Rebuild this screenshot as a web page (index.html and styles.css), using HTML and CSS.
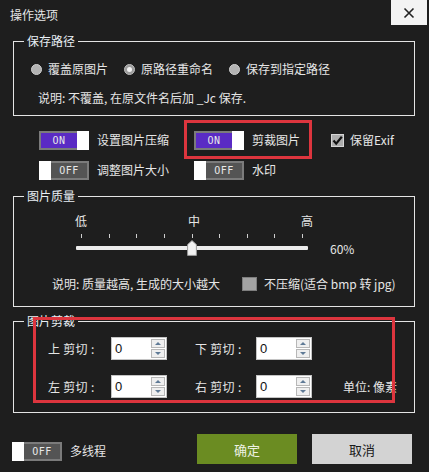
FILE: index.html
```html
<!DOCTYPE html>
<html lang="zh">
<head>
<meta charset="utf-8">
<title>操作选项</title>
<link rel="stylesheet" href="styles.css">
</head>
<body>
<div class="dialog">
  <header class="titlebar">
    <span class="title">操作选项</span>
    <button class="close" aria-label="关闭">
      <svg width="12" height="12" viewBox="0 0 12 12"><path d="M1.5 1.5 L10.5 10.5 M10.5 1.5 L1.5 10.5" stroke="#222" stroke-width="1.6" fill="none"/></svg>
    </button>
  </header>

  <fieldset class="group g-path">
    <legend>保存路径</legend>
    <div class="radios">
      <span class="radio"><span class="dot"></span>覆盖原图片</span>
      <span class="radio on"><span class="dot"></span>原路径重命名</span>
      <span class="radio"><span class="dot"></span>保存到指定路径</span>
    </div>
    <p class="note">说明: 不覆盖, 在原文件名后加 _Jc 保存.</p>
  </fieldset>

  <div class="switches">
    <div class="opt"><span class="toggle on"><span class="face">ON</span><span class="knob"></span></span><span class="lbl">设置图片压缩</span></div>
    <div class="opt hl"><span class="toggle on"><span class="face">ON</span><span class="knob"></span></span><span class="lbl">剪裁图片</span></div>
    <div class="opt"><span class="cbox"><svg width="13" height="13" viewBox="0 0 13 13"><path d="M2.5 6.5 L5.2 9.6 L10.8 2.8" stroke="#111" stroke-width="2.2" fill="none"/></svg></span><span class="lbl">保留Exif</span></div>
    <div class="opt"><span class="toggle off"><span class="knob"></span><span class="face">OFF</span></span><span class="lbl">调整图片大小</span></div>
    <div class="opt"><span class="toggle off"><span class="knob"></span><span class="face">OFF</span></span><span class="lbl">水印</span></div>
  </div>

  <fieldset class="group g-quality">
    <legend>图片质量</legend>
    <div class="slider-row">
      <div class="slider">
        <div class="marks"><span>低</span><span>中</span><span>高</span></div>
        <div class="ticks"><i></i><i></i><i></i><i></i><i></i><i></i><i></i><i></i><i></i></div>
        <div class="track-area">
          <div class="track"></div>
          <svg class="thumb" style="left:50%" width="10" height="16" viewBox="0 0 10 16"><path d="M5 0.6 L9.4 4.6 L9.4 15.4 L0.6 15.4 L0.6 4.6 Z" fill="#f2f2f2" stroke="#9a9a9a" stroke-width="1"/></svg>
        </div>
      </div>
      <span class="pct">60%</span>
    </div>
    <div class="q-note">
      <span class="desc">说明: 质量越高, 生成的大小越大</span>
      <span class="sq"></span>
      <span>不压缩(适合 bmp 转 jpg)</span>
    </div>
  </fieldset>

  <fieldset class="group g-crop">
    <legend>图片剪裁</legend>
    <div class="crop-row">
      <span class="clbl">上 剪切 :</span>
      <span class="spin"><span class="val">0</span><span class="btns"><b class="up"></b><b class="down"></b></span></span>
      <span class="clbl second">下 剪切 :</span>
      <span class="spin"><span class="val">0</span><span class="btns"><b class="up"></b><b class="down"></b></span></span>
    </div>
    <div class="crop-row">
      <span class="clbl">左 剪切 :</span>
      <span class="spin"><span class="val">0</span><span class="btns"><b class="up"></b><b class="down"></b></span></span>
      <span class="clbl second">右 剪切 :</span>
      <span class="spin"><span class="val">0</span><span class="btns"><b class="up"></b><b class="down"></b></span></span>
      <span class="unit">单位: 像素</span>
    </div>
  </fieldset>

  <footer class="footer">
    <div class="opt"><span class="toggle off"><span class="knob"></span><span class="face">OFF</span></span><span class="lbl">多线程</span></div>
    <button class="btn ok">确定</button>
    <button class="btn cancel">取消</button>
  </footer>
</div>
</body>
</html>
```

FILE: styles.css
```css
html, body {
  margin: 0;
  padding: 0;
  background: #1e1e1e;
}
body {
  width: 429px;
  height: 472px;
  overflow: hidden;
  font-family: "Noto Sans CJK SC", "Microsoft YaHei", sans-serif;
  font-size: 12px;
  color: #e6e6e6;
}
.dialog {
  display: flex;
  flex-direction: column;
}

/* title bar */
.titlebar {
  display: flex;
  justify-content: space-between;
  align-items: flex-start;
  height: 32px;
}
.title {
  margin: 6px 0 0 10px;
  line-height: 18px;
  font-size: 12px;
}
.close {
  width: 36px;
  height: 25px;
  margin: 0 2px 0 0;
  padding: 0;
  border: none;
  background: #f3f3f3;
  display: flex;
  align-items: center;
  justify-content: center;
}

/* group boxes */
.group {
  margin: 0 14px 0 13px;
  padding: 0;
  border: 1px solid #e4e4e4;
  min-width: 0;
  position: relative;
}
.group legend {
  margin-left: 10px;
  padding: 0 3px;
  height: 18px;
  line-height: 18px;
  font-size: 12px;
  color: #e8eef4;
}

.g-path { padding-bottom: 8px; }
.radios {
  display: flex;
  align-items: center;
  height: 20px;
  margin-top: 9px;
  padding-left: 17px;
}
.radio {
  display: flex;
  align-items: center;
  margin-right: 16px;
  line-height: 20px;
}
.dot {
  box-sizing: border-box;
  width: 11px;
  height: 11px;
  border-radius: 50%;
  background: #b3b3b3;
  border: 1px solid #d0d0d0;
  margin-right: 6px;
  display: flex;
  align-items: center;
  justify-content: center;
}
.radio.on .dot {
  background: #9c9c9c;
  border-color: #bdbdbd;
}
.radio.on .dot::before {
  content: "";
  width: 5px;
  height: 5px;
  border-radius: 50%;
  background: #f4f4f4;
}
.note {
  margin: 10px 0 0 24px;
  line-height: 18px;
}

/* switches */
.switches {
  display: grid;
  grid-template-columns: 155px 137px auto;
  grid-auto-rows: 20px;
  row-gap: 10px;
  padding-left: 39px;
  margin: 14px 0 7px;
}
.opt {
  display: flex;
  align-items: center;
  position: relative;
}
.opt .lbl { margin-left: 8px; line-height: 20px; }
.hl::after {
  content: "";
  position: absolute;
  left: -10px;
  top: -10px;
  width: 128px;
  height: 39px;
  box-sizing: border-box;
  border: 3px solid #dd353e;
}
.toggle {
  display: flex;
  width: 50px;
  height: 19px;
  flex: none;
}
.toggle .face {
  flex: 1;
  box-sizing: border-box;
  border: 2px solid #7b7b7b;
  display: flex;
  align-items: center;
  justify-content: center;
  font-family: "DejaVu Sans Mono", monospace;
  font-size: 10px;
  letter-spacing: 0.5px;
  color: #e8e8e8;
}
.toggle.on .face { background: #5a2bc4; border-right: none; }
.toggle.off .face { background: #545454; border-left: none; }
.toggle .knob {
  width: 12px;
  background: #ffffff;
}
.cbox {
  box-sizing: border-box;
  width: 13px;
  height: 13px;
  background: #adadad;
  border: 1px solid #d6d6d6;
  display: flex;
  align-items: center;
  justify-content: center;
}
.cbox svg { margin: -1px; }
.opt .cbox + .lbl { margin-left: 6px; }

/* quality */
.g-quality { padding-bottom: 13px; }
.slider-row {
  display: flex;
  align-items: flex-end;
  margin: 7px 0 0 62px;
}
.slider {
  width: 232px;
}
.marks {
  display: flex;
  justify-content: space-between;
  margin: 0 -5px 0 -1px;
  line-height: 18px;
}
.ticks {
  display: flex;
  justify-content: space-between;
  height: 4px;
  margin: 4px 5px 0;
}
.ticks i {
  width: 1px;
  height: 4px;
  background: #cfcfcf;
}
.track-area {
  position: relative;
  height: 17px;
  margin-top: 2px;
}
.track {
  position: absolute;
  left: 0;
  right: 0;
  top: 6px;
  height: 4px;
  background: #ececec;
  border-radius: 1px;
}
.thumb {
  position: absolute;
  top: 0;
  margin-left: -5px;
}
.pct {
  margin-left: 22px;
  line-height: 18px;
  margin-bottom: -1px;
  font-size: 12px;
}
.q-note {
  display: flex;
  align-items: center;
  margin: 18px 0 0 38px;
  line-height: 18px;
}
.q-note .desc { width: 190px; }
.sq {
  box-sizing: border-box;
  width: 15px;
  height: 14px;
  background: #a3a3a3;
  border: 1px solid #7e7e7e;
  margin-right: 7px;
}

/* crop */
.g-crop {
  margin-top: 5px;
  padding-bottom: 14px;
}
.g-crop::after {
  content: "";
  position: absolute;
  left: 19px;
  top: -13px;
  width: 362px;
  height: 86px;
  box-sizing: border-box;
  border: 3px solid #dd353e;
}
.crop-row {
  display: flex;
  align-items: center;
  height: 23px;
  padding-left: 34px;
  margin-top: 7px;
}
.crop-row + .crop-row { margin-top: 15px; }
.clbl {
  width: 63px;
  font-size: 12px;
  letter-spacing: 0.3px;
}
.clbl.second { margin-left: 28px; width: 61px; }
.spin {
  box-sizing: border-box;
  width: 56px;
  height: 23px;
  background: #ffffff;
  border: 1px solid #c4c4c4;
  display: flex;
  align-items: center;
  justify-content: space-between;
  padding: 0 1px 0 3px;
}
.val {
  font-family: "Liberation Sans", Arial, sans-serif;
  font-size: 13px;
  color: #111;
}
.btns {
  display: flex;
  flex-direction: column;
  gap: 1px;
}
.btns b {
  box-sizing: border-box;
  width: 14px;
  height: 9px;
  background: #efefef;
  border: 1px solid #b7b7b7;
  display: flex;
  align-items: center;
  justify-content: center;
}
.btns b::before {
  content: "";
  border-left: 3px solid transparent;
  border-right: 3px solid transparent;
}
.btns .up::before { border-bottom: 3px solid #5f7a96; }
.btns .down::before { border-top: 3px solid #5f7a96; }
.unit {
  margin-left: 31px;
  font-size: 12px;
}

/* footer */
.footer {
  display: flex;
  align-items: center;
  height: 30px;
  margin-top: 21px;
  padding: 0 17px 0 12px;
}
.footer .opt { margin-top: 4px; }
.footer .btn:first-of-type { margin-left: auto; }
.btn {
  width: 100px;
  height: 30px;
  border: none;
  padding: 0;
  font-family: "Noto Sans CJK SC", sans-serif;
  font-size: 13px;
}
.btn.ok {
  background: #6b8c22;
  color: #eef2e4;
}
.btn.cancel {
  margin-left: 15px;
  background: #d3d3d3;
  color: #1a1a1a;
}
```
